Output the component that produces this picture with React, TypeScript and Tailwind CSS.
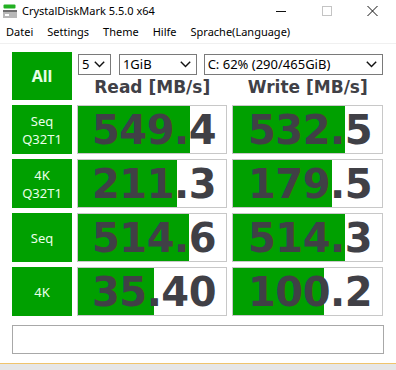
const rows = [
  { label: ['Seq', 'Q32T1'], read: '549.4', readBar: 112, write: '532.5', writeBar: 112 },
  { label: ['4K', 'Q32T1'], read: '211.3', readBar: 99, write: '179.5', writeBar: 99 },
  { label: ['Seq'], read: '514.6', readBar: 111, write: '514.3', writeBar: 112 },
  { label: ['4K'], read: '35.40', readBar: 76, write: '100.2', writeBar: 91 },
];

function Chevron() {
  return (
    <svg width="11" height="7" viewBox="0 0 11 7" className="shrink-0">
      <path d="M0.8 0.8 L5.5 5.6 L10.2 0.8" fill="none" stroke="#111" strokeWidth="1.4" />
    </svg>
  );
}

function Select({ value, className }: { value: string; className: string }) {
  return (
    <div className={`flex h-[21px] items-center justify-between border border-[#7a7a7a] bg-white pl-[3px] pr-[5px] text-[13px] text-black ${className}`}>
      <span>{value}</span>
      <Chevron />
    </div>
  );
}

function ResultBox({ value, bar }: { value: string; bar: number }) {
  return (
    <div className="relative flex h-[49px] items-center justify-end border border-[#c8c8c8] bg-white pr-[10px]">
      <div className="absolute left-0 top-0 h-full bg-[#00a000]" style={{ width: bar }} />
      <span className="relative font-['DejaVu_Sans',sans-serif] text-[40px] font-bold leading-none tracking-[-0.5px] text-[#404046]">
        {value}
      </span>
    </div>
  );
}

export default function App() {
  return (
    <div className="flex h-[370px] w-[396px] flex-col overflow-hidden bg-white font-['Noto_Sans',sans-serif]">
      {/* title bar */}
      <div className="flex h-[22px] items-center">
        <svg width="16" height="16" viewBox="0 0 16 16" className="ml-[2px]">
          <rect x="1.5" y="1.5" width="12" height="4" rx="1" fill="#22b022" />
          <rect x="1" y="7" width="14" height="8" fill="#b8b8b8" />
          <rect x="1" y="7" width="14" height="2" fill="#6e6e6e" />
          <rect x="3" y="11" width="4" height="2" fill="#ffffff" />
        </svg>
        <span className="ml-[4px] text-[11px] text-black">CrystalDiskMark 5.5.0 x64</span>
        <div className="ml-auto flex items-center">
          <svg width="46" height="20" viewBox="0 0 46 20">
            <path d="M18 10.5 H28" stroke="#111" strokeWidth="1" />
          </svg>
          <svg width="46" height="20" viewBox="0 0 46 20">
            <rect x="18.5" y="5.5" width="9" height="9" fill="none" stroke="#c4c4c4" strokeWidth="1" />
          </svg>
          <svg width="46" height="20" viewBox="0 0 46 20">
            <path d="M17.5 5 L27.5 15 M27.5 5 L17.5 15" stroke="#111" strokeWidth="1" />
          </svg>
        </div>
      </div>

      {/* menu bar */}
      <div className="flex h-[22px] items-center gap-[14px] border-b border-[#f0f0f0] pl-[6px] text-[11px] text-black">
        <span>Datei</span>
        <span>Settings</span>
        <span>Theme</span>
        <span>Hilfe</span>
        <span>Sprache(Language)</span>
      </div>

      {/* main */}
      <div className="flex flex-col px-[12px] pt-[8px]">
        <div className="grid grid-cols-[60px_150px_151px] gap-x-[5px] gap-y-[5px]">
          <div className="flex h-[48px] items-center justify-center bg-[#00a000] text-[16px] font-bold text-[#e6ffe6]">
            All
          </div>
          <div className="col-span-2 flex flex-col">
            <div className="mt-[2px] flex items-center">
              <Select value="5" className="ml-[1px] w-[33px]" />
              <Select value="1GiB" className="ml-[8px] w-[78px]" />
              <Select value="C: 62% (290/465GiB)" className="ml-[7px] w-[180px]" />
            </div>
            <div className="grid h-[25px] grid-cols-2 items-center gap-x-[5px] font-['DejaVu_Sans',sans-serif] text-[17px] font-bold text-[#404046]">
              <span className="text-center">Read [MB/s]</span>
              <span className="text-center">Write [MB/s]</span>
            </div>
          </div>

          {rows.map((r) => (
            <div key={r.label.join('-') + r.read} className="contents">
              <div className="flex h-[49px] flex-col items-center justify-center bg-[#00a000] text-[13px] leading-[18px] text-[#eaffea]">
                {r.label.map((l) => (
                  <span key={l}>{l}</span>
                ))}
              </div>
              <ResultBox value={r.read} bar={r.readBar} />
              <ResultBox value={r.write} bar={r.writeBar} />
            </div>
          ))}
        </div>

        <div className="mt-[9px] h-[29px] border border-[#a8a8a8] bg-white" />
      </div>

      <div className="mt-auto h-[7px] border-t border-[#f0c46c] bg-[#e6e6e6]" />
    </div>
  );
}
